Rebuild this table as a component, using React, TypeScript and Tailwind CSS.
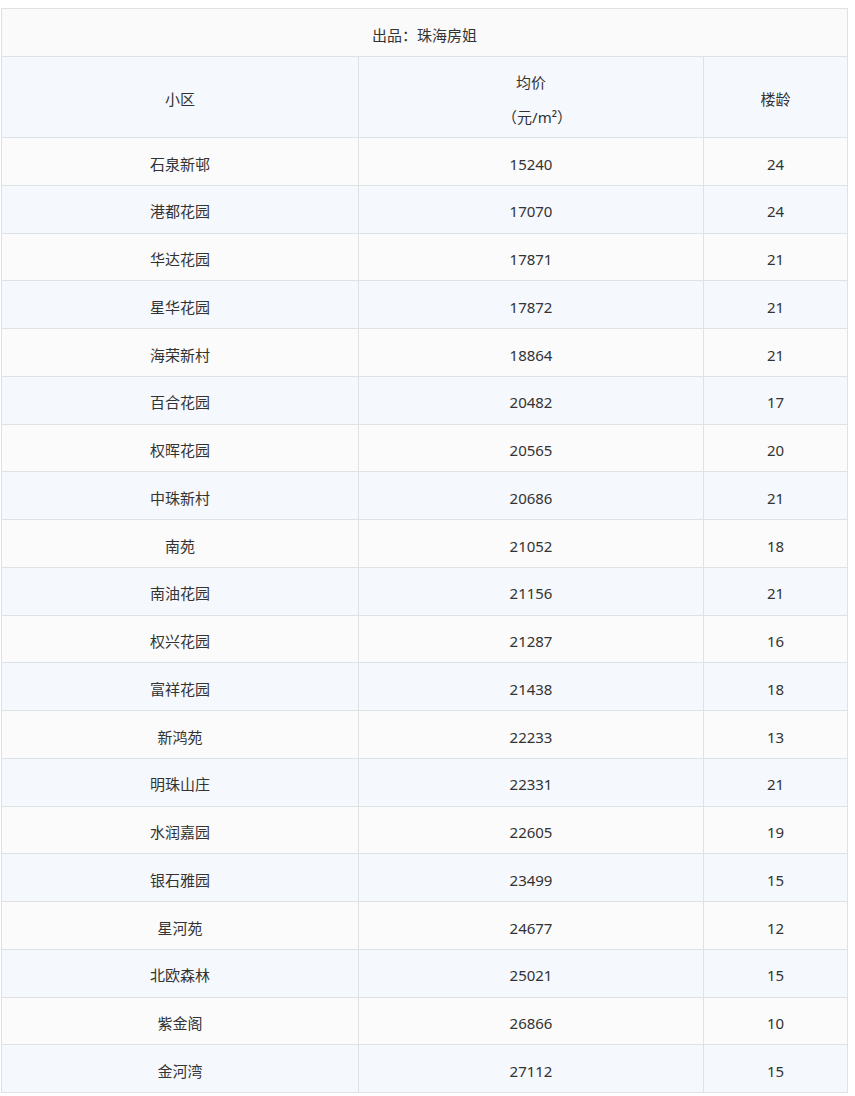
import React from 'react';

type Row = { name: string; price: string; age: string };

const rows: Row[] = [
  { name: '石泉新邨', price: '15240', age: '24' },
  { name: '港都花园', price: '17070', age: '24' },
  { name: '华达花园', price: '17871', age: '21' },
  { name: '星华花园', price: '17872', age: '21' },
  { name: '海荣新村', price: '18864', age: '21' },
  { name: '百合花园', price: '20482', age: '17' },
  { name: '权晖花园', price: '20565', age: '20' },
  { name: '中珠新村', price: '20686', age: '21' },
  { name: '南苑', price: '21052', age: '18' },
  { name: '南油花园', price: '21156', age: '21' },
  { name: '权兴花园', price: '21287', age: '16' },
  { name: '富祥花园', price: '21438', age: '18' },
  { name: '新鸿苑', price: '22233', age: '13' },
  { name: '明珠山庄', price: '22331', age: '21' },
  { name: '水润嘉园', price: '22605', age: '19' },
  { name: '银石雅园', price: '23499', age: '15' },
  { name: '星河苑', price: '24677', age: '12' },
  { name: '北欧森林', price: '25021', age: '15' },
  { name: '紫金阁', price: '26866', age: '10' },
  { name: '金河湾', price: '27112', age: '15' },
];

const cell = 'border border-[#dfe2e5] text-center align-middle pt-[5px] pb-0';

const App: React.FC = () => {
  return (
    <div
      className="min-h-screen bg-white pl-[1px] pt-[8px] text-[15px] text-[#333]"
      style={{ fontFamily: '"Noto Sans", "Noto Sans CJK SC", sans-serif' }}
    >
      <table className="w-[846px] border-collapse table-fixed">
        <colgroup>
          <col className="w-[357px]" />
          <col className="w-[345px]" />
          <col className="w-[144px]" />
        </colgroup>
        <tbody>
          <tr className="bg-[#fafafa]">
            <td colSpan={3} className={`${cell} h-[48px]`}>
              出品：珠海房姐
            </td>
          </tr>
          <tr className="bg-[#f5f8fd]">
            <td className={`${cell} h-[81px]`}>小区</td>
            <td className={cell}>
              <div className="flex flex-col items-center gap-[11px]">
                <span className="leading-[24px]">均价</span>
                <span className="leading-[24px] pl-[12px]">（元/m²）</span>
              </div>
            </td>
            <td className={cell}>楼龄</td>
          </tr>
          {rows.map((r, i) => (
            <tr key={r.name} className={i % 2 === 0 ? 'bg-[#fbfbfb]' : 'bg-[#f5f8fd]'}>
              <td className={`${cell} h-[47.75px]`}>{r.name}</td>
              <td className={cell}>{r.price}</td>
              <td className={cell}>{r.age}</td>
            </tr>
          ))}
        </tbody>
      </table>
    </div>
  );
};

export default App;
